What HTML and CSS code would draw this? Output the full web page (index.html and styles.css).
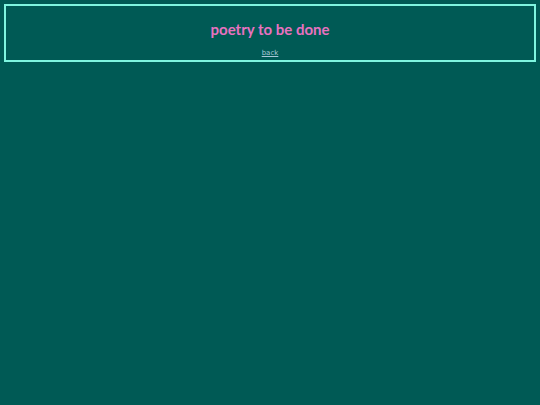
FILE: index.html
```html
<!DOCTYPE html>
<html>
<head>
<meta charset="utf-8">
<link rel="stylesheet" href="styles.css">
<title>poetry to be done</title>
</head>
<body>
<div class="box">
  <h1 class="title">poetry to be done</h1>
  <a class="back" href="#">back</a>
</div>
</body>
</html>
```
FILE: styles.css
```css
html, body {
  background: #005a55;
}
body {
  margin: 4px;
  font-family: "DejaVu Sans", sans-serif;
}
.box {
  border: 2px solid #7ff5e0;
  outline: 1px solid #3fae9e;
  height: 58px;
  display: flex;
  flex-direction: column;
  align-items: center;
  box-sizing: border-box;
  padding-top: 14px;
}
.title {
  margin: 0;
  font-family: Lato, "DejaVu Sans", sans-serif;
  font-size: 15px;
  font-weight: bold;
  color: #e872c0;
  line-height: 18px;
}
.back {
  margin-top: 10px;
  font-size: 7px;
  line-height: 10px;
  color: #a8c8d8;
}
```
